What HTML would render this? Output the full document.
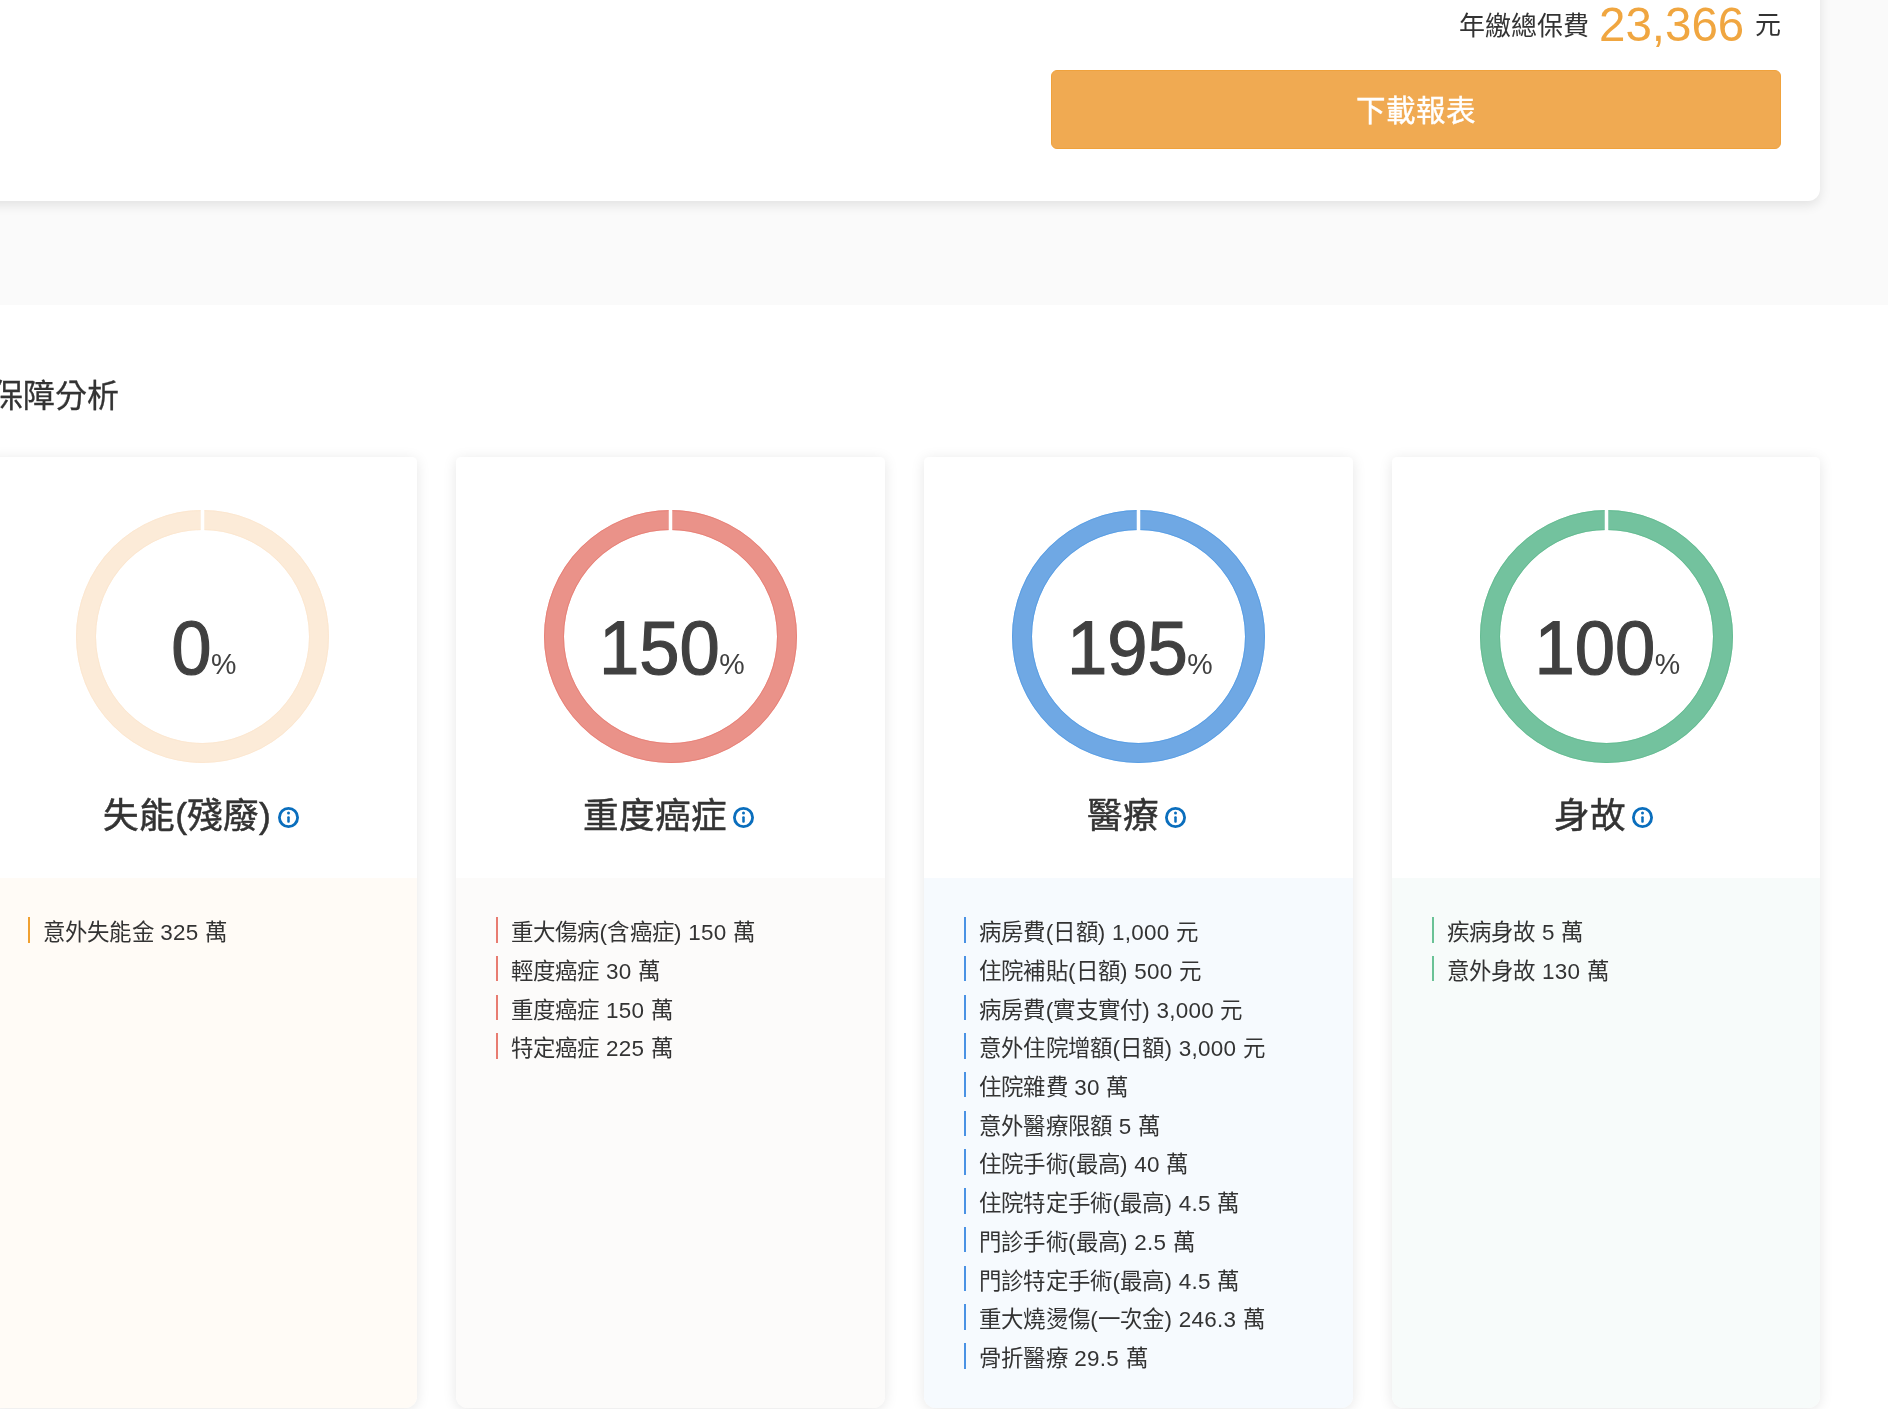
<!DOCTYPE html>
<html lang="zh-TW">
<head>
<meta charset="utf-8">
<style>
*{box-sizing:border-box;margin:0;padding:0}
html,body{width:1888px;height:1409px;overflow:hidden;background:#fff}
.layer{position:absolute;left:0;top:0;width:1888px;height:1409px;will-change:transform}
body{font-family:"Liberation Sans",sans-serif;color:#333;position:relative}
.band{position:absolute;left:0;top:0;width:1888px;height:305px;background:#fafafa}
.topcard{position:absolute;left:-40px;top:-40px;width:1860px;height:241px;background:#fff;border-radius:12px;box-shadow:0 4px 12px rgba(0,0,0,0.1)}
.btn{position:absolute;left:1051px;top:70px;width:730px;height:79px;background:#f0aa52;border:1px solid #f0a23c;border-radius:6px;color:#fff;font-size:29.5px;text-align:center;line-height:80.6px;-webkit-text-stroke:0.4px #fff}
.sec{position:absolute;left:-9.3px;top:374px;font-size:32px;line-height:44px;color:#333;-webkit-text-stroke:0.3px #333}
.card{position:absolute;top:457px;width:429px;height:951px;background:#fff;border-radius:5px 5px 12px 12px;box-shadow:0 2px 14px rgba(0,0,0,0.1);overflow:hidden}
.card .ring{position:absolute;left:50%;top:53px;margin-left:-126.5px;width:253px;height:253px}
.card .pct{position:absolute;left:0;right:0;top:150.5px;text-align:center;font-size:76px;line-height:80px;color:#404040;font-weight:400;white-space:nowrap;-webkit-text-stroke:1.2px #404040;transform:translateX(1.3px) scaleX(0.953)}
.card .pct small{font-size:30px;font-weight:400;-webkit-text-stroke:0;margin-left:-0.6px}
.card .ttl{position:absolute;left:-2.5px;right:2.5px;top:333.8px;text-align:center;font-size:35.6px;line-height:50px;color:#333;font-weight:400;white-space:nowrap;-webkit-text-stroke:0.5px #333}
.card .ttl svg{display:inline-block;vertical-align:middle;margin-left:6px;position:relative;top:-0.5px}
.card .list{position:absolute;left:0;top:421px;width:100%;bottom:0;padding-top:39.1px}
.card ul{list-style:none;margin-left:40px}
.card li{position:relative;padding-left:14.6px;font-size:22.45px;line-height:32.4px;letter-spacing:0.25px;height:38.72px;color:#333;white-space:nowrap}
.card li::before{content:"";position:absolute;left:0;top:0;width:2.2px;height:25.5px;background:var(--bar)}
</style>
</head>
<body>
<div class="layer">
<div class="band"></div>
<div class="topcard"></div>
<div style="position:absolute;left:1458.5px;top:7.5px;font-size:26px;line-height:36px;color:#333">年繳總保費</div>
<div style="position:absolute;left:1599px;top:-5.5px;font-size:47.5px;line-height:60px;color:#f0a640">23,366</div>
<div style="position:absolute;left:1754.5px;top:7px;font-size:26px;line-height:36px;color:#333">元</div>
<div class="btn">下載報表</div>

<div class="sec">保障分析</div>

<div class="card" style="left:-12px">
  <svg class="ring" viewBox="0 0 253 253"><circle cx="126.5" cy="126.5" r="116.5" fill="none" stroke="#fcebd8" stroke-width="20"/><circle cx="126.5" cy="126.5" r="126" fill="none" stroke="#fbe4cb" stroke-width="1" opacity="0.6"/><circle cx="126.5" cy="126.5" r="107" fill="none" stroke="#fbe4cb" stroke-width="1" opacity="0.6"/><rect x="124.75" y="0" width="3.5" height="22" fill="#fff"/></svg>
  <div class="pct">0<small>%</small></div>
  <div class="ttl" style="left:-1.5px;right:1.5px">失能(殘廢)<svg style="margin-left:7px" width="21" height="21" viewBox="0 0 21 21"><circle cx="10.5" cy="10.5" r="9.1" fill="none" stroke="#0a6ebd" stroke-width="2.8"/><circle cx="10.5" cy="5.9" r="1.5" fill="#0a6ebd"/><rect x="9.25" y="9.2" width="2.5" height="6.6" rx="1.1" fill="#0a6ebd"/></svg></div>
  <div class="list" style="background:#fffbf6;--bar:#f0a030"><ul>
    <li>意外失能金 325 萬</li>
  </ul></div>
</div>

<div class="card" style="left:456px">
  <svg class="ring" viewBox="0 0 253 253"><circle cx="126.5" cy="126.5" r="116.5" fill="none" stroke="#ea9289" stroke-width="20"/><circle cx="126.5" cy="126.5" r="126" fill="none" stroke="#e6776d" stroke-width="1" opacity="0.6"/><circle cx="126.5" cy="126.5" r="107" fill="none" stroke="#e6776d" stroke-width="1" opacity="0.6"/><rect x="124.75" y="0" width="3.5" height="22" fill="#fff"/></svg>
  <div class="pct">150<small>%</small></div>
  <div class="ttl">重度癌症<svg width="21" height="21" viewBox="0 0 21 21"><circle cx="10.5" cy="10.5" r="9.1" fill="none" stroke="#0a6ebd" stroke-width="2.8"/><circle cx="10.5" cy="5.9" r="1.5" fill="#0a6ebd"/><rect x="9.25" y="9.2" width="2.5" height="6.6" rx="1.1" fill="#0a6ebd"/></svg></div>
  <div class="list" style="background:#fcfbfa;--bar:#e87c71"><ul>
    <li>重大傷病(含癌症) 150 萬</li>
    <li>輕度癌症 30 萬</li>
    <li>重度癌症 150 萬</li>
    <li>特定癌症 225 萬</li>
  </ul></div>
</div>

<div class="card" style="left:924.3px">
  <svg class="ring" viewBox="0 0 253 253"><circle cx="126.5" cy="126.5" r="116.5" fill="none" stroke="#6fa8e4" stroke-width="20"/><circle cx="126.5" cy="126.5" r="126" fill="none" stroke="#4b97e4" stroke-width="1" opacity="0.6"/><circle cx="126.5" cy="126.5" r="107" fill="none" stroke="#4b97e4" stroke-width="1" opacity="0.6"/><rect x="124.75" y="0" width="3.5" height="22" fill="#fff"/></svg>
  <div class="pct">195<small>%</small></div>
  <div class="ttl">醫療<svg width="21" height="21" viewBox="0 0 21 21"><circle cx="10.5" cy="10.5" r="9.1" fill="none" stroke="#0a6ebd" stroke-width="2.8"/><circle cx="10.5" cy="5.9" r="1.5" fill="#0a6ebd"/><rect x="9.25" y="9.2" width="2.5" height="6.6" rx="1.1" fill="#0a6ebd"/></svg></div>
  <div class="list" style="background:#f6fafe;--bar:#4a92e4"><ul>
    <li>病房費(日額) 1,000 元</li>
    <li>住院補貼(日額) 500 元</li>
    <li>病房費(實支實付) 3,000 元</li>
    <li>意外住院增額(日額) 3,000 元</li>
    <li>住院雜費 30 萬</li>
    <li>意外醫療限額 5 萬</li>
    <li>住院手術(最高) 40 萬</li>
    <li>住院特定手術(最高) 4.5 萬</li>
    <li>門診手術(最高) 2.5 萬</li>
    <li>門診特定手術(最高) 4.5 萬</li>
    <li>重大燒燙傷(一次金) 246.3 萬</li>
    <li>骨折醫療 29.5 萬</li>
  </ul></div>
</div>

<div class="card" style="left:1392px;width:428px">
  <svg class="ring" viewBox="0 0 253 253"><circle cx="126.5" cy="126.5" r="116.5" fill="none" stroke="#73c29e" stroke-width="20"/><circle cx="126.5" cy="126.5" r="126" fill="none" stroke="#5cb78b" stroke-width="1" opacity="0.6"/><circle cx="126.5" cy="126.5" r="107" fill="none" stroke="#5cb78b" stroke-width="1" opacity="0.6"/><rect x="124.75" y="0" width="3.5" height="22" fill="#fff"/></svg>
  <div class="pct">100<small>%</small></div>
  <div class="ttl">身故<svg width="21" height="21" viewBox="0 0 21 21"><circle cx="10.5" cy="10.5" r="9.1" fill="none" stroke="#0a6ebd" stroke-width="2.8"/><circle cx="10.5" cy="5.9" r="1.5" fill="#0a6ebd"/><rect x="9.25" y="9.2" width="2.5" height="6.6" rx="1.1" fill="#0a6ebd"/></svg></div>
  <div class="list" style="background:#f7fbfa;--bar:#6ac296"><ul>
    <li>疾病身故 5 萬</li>
    <li>意外身故 130 萬</li>
  </ul></div>
</div>
</div>
</body>
</html>
